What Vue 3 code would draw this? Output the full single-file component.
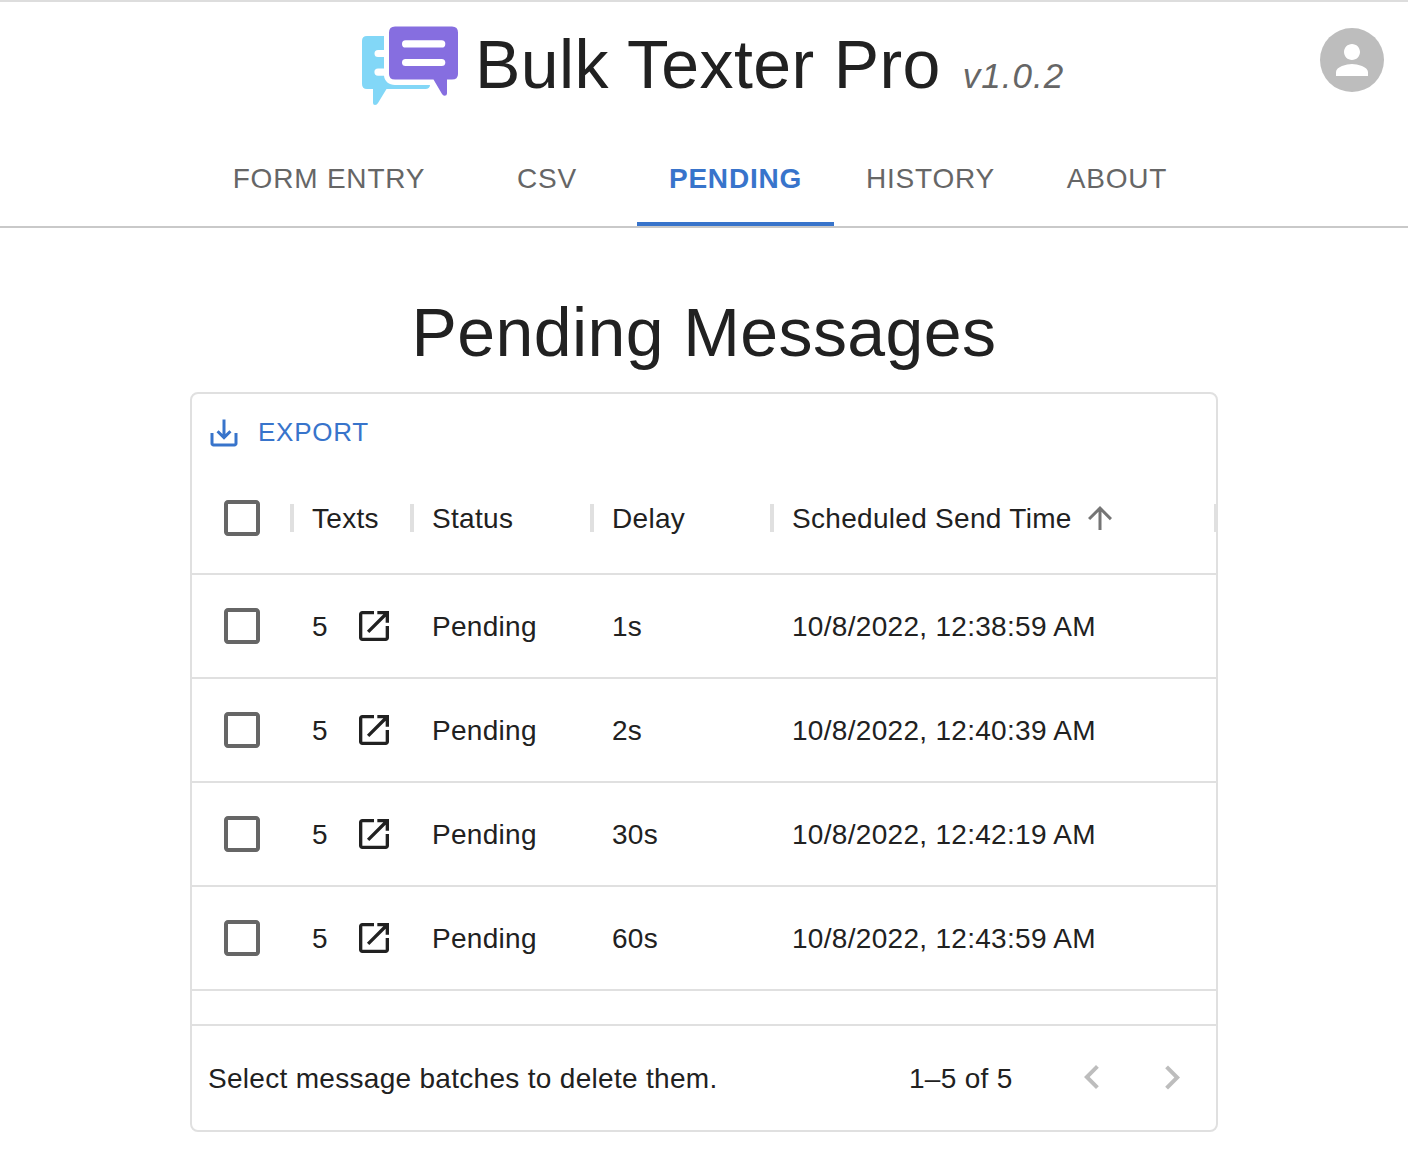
<script setup>
const tabs = [
  { label: 'FORM ENTRY', width: 256 },
  { label: 'CSV', width: 180 },
  { label: 'PENDING', width: 197, active: true },
  { label: 'HISTORY', width: 193 },
  { label: 'ABOUT', width: 180 },
]
const rows = [
  { texts: 5, status: 'Pending', delay: '1s', time: '10/8/2022, 12:38:59 AM' },
  { texts: 5, status: 'Pending', delay: '2s', time: '10/8/2022, 12:40:39 AM' },
  { texts: 5, status: 'Pending', delay: '30s', time: '10/8/2022, 12:42:19 AM' },
  { texts: 5, status: 'Pending', delay: '60s', time: '10/8/2022, 12:43:59 AM' },
]
const boxPath = 'M19 5v14H5V5h14m0-2H5c-1.1 0-2 .9-2 2v14c0 1.1.9 2 2 2h14c1.1 0 2-.9 2-2V5c0-1.1-.9-2-2-2z'
</script>

<template>
  <div class="page">
    <header class="header">
      <div class="brand">
        <svg class="logo" viewBox="0 0 100 84" width="100" height="84">
          <path fill="#82d7f7" d="M7 12H24V26H18a3.5 3.5 0 0 0 0 7H24V44.500H18a3.600 3.600 0 0 0 0 7.200H24C24.500 57 29 61 35 61H70C70 63.500 68 65 65.500 65H26.500L18 79Q17 81 15 81Q13 81 13 79V65H7Q2 65 2 60V17Q2 12 7 12Z" />
          <path fill="#866ee0" d="M35 2.500H92Q98 2.500 98 8.500V50Q98 55.500 92 55.500H87V69.500Q87 71.800 84.500 71.800Q83 71.800 82 70L73.500 55.500H35Q29 55.500 29 50V8.500Q29 2.500 35 2.500Z" />
          <rect x="42" y="16.300" width="43.300" height="7.200" rx="3.600" fill="#fff" />
          <rect x="42" y="34.900" width="43.300" height="7.200" rx="3.600" fill="#fff" />
        </svg>
        <h1 class="title">Bulk Texter Pro</h1>
        <em class="version">v1.0.2</em>
      </div>
      <div class="avatar">
        <svg viewBox="0 0 24 24" width="48" height="48"><path fill="#fff" d="M12 12c2.210 0 4-1.790 4-4s-1.790-4-4-4-4 1.790-4 4 1.790 4 4 4zm0 2c-2.670 0-8 1.340-8 4v2h16v-2c0-2.660-5.330-4-8-4z" /></svg>
      </div>
    </header>

    <nav class="tabs">
      <a v-for="t in tabs" :key="t.label" class="tab" :class="{ active: t.active }" :style="{ width: t.width + 'px' }"><span>{{ t.label }}</span></a>
    </nav>

    <h2 class="heading">Pending Messages</h2>

    <section class="grid">
      <div class="toolbar">
        <svg viewBox="0 0 24 24" width="36" height="36"><path fill="currentColor" d="M19 12v7H5v-7H3v7c0 1.1.9 2 2 2h14c1.1 0 2-.9 2-2v-7h-2zm-6 .67l2.590-2.580L17 11.500l-5 5-5-5 1.410-1.410L11 12.670V3h2z" /></svg>
        <span class="export">EXPORT</span>
      </div>
      <div class="row head">
        <div class="cell check"><svg viewBox="0 0 24 24" width="48" height="48"><path fill="#666" :d="boxPath" /></svg></div>
        <div class="cell texts"><span>Texts</span></div>
        <div class="cell status"><span>Status</span></div>
        <div class="cell delay"><span>Delay</span></div>
        <div class="cell time">
          <span>Scheduled Send Time</span>
          <svg class="sort" viewBox="0 0 24 24" width="36" height="36"><path fill="#757575" d="M4 12l1.410 1.410L11 7.830V20h2V7.830l5.580 5.590L20 12l-8-8-8 8z" /></svg>
        </div>
      </div>
      <div v-for="r in rows" :key="r.time" class="row">
        <div class="cell check"><svg viewBox="0 0 24 24" width="48" height="48"><path fill="#666" :d="boxPath" /></svg></div>
        <div class="cell texts">
          <span>{{ r.texts }}</span>
          <svg class="open" viewBox="0 0 24 24" width="40" height="40"><path fill="#212121" d="M19 19H5V5h7V3H5c-1.110 0-2 .9-2 2v14c0 1.1.89 2 2 2h14c1.1 0 2-.9 2-2v-7h-2v7zM14 3v2h3.590l-9.830 9.830 1.410 1.410L19 6.410V10h2V3h-7z" /></svg>
        </div>
        <div class="cell status"><span>{{ r.status }}</span></div>
        <div class="cell delay"><span>{{ r.delay }}</span></div>
        <div class="cell time"><span>{{ r.time }}</span></div>
      </div>
      <div class="filler"></div>
      <footer class="footer">
        <span class="hint">Select message batches to delete them.</span>
        <span class="range">1–5 of 5</span>
        <svg class="prev" viewBox="0 0 24 24" width="48" height="48"><path fill="#bdbdbd" d="M15.410 16.090l-4.580-4.590 4.580-4.590L14 5.500l-6 6 6 6z" /></svg>
        <svg class="next" viewBox="0 0 24 24" width="48" height="48"><path fill="#bdbdbd" d="M8.590 16.340l4.580-4.590-4.580-4.590L10 5.750l6 6-6 6z" /></svg>
      </footer>
    </section>
  </div>
</template>

<style>
body { margin: 0; background: #fff; }
</style>

<style scoped>
.page {
  box-sizing: border-box;
  width: 1408px;
  height: 1170px;
  overflow: hidden;
  border-top: 2px solid #ddd;
  background: #fff;
  color: #212121;
  font-family: "Liberation Sans", Arial, sans-serif;
  font-size: 28px;
  letter-spacing: 0.3px;
  line-height: 40px;
}
svg { display: block; flex: none; }
span, em, h1, h2 { white-space: nowrap; }
.header {
  display: flex;
  justify-content: space-between;
  align-items: flex-start;
  height: 128px;
  padding: 0 24px 0 360px;
}
.brand { display: flex; align-items: baseline; }
.logo { align-self: flex-start; margin-top: 22px; }
.title {
  margin: 22px 0 0 15px;
  font-size: 68px;
  font-weight: 400;
  line-height: 80px;
  letter-spacing: 0.4px;
}
.version {
  margin-left: 22px;
  color: #666;
  font-size: 35px;
  letter-spacing: 1px;
}
.avatar {
  display: flex;
  align-items: center;
  justify-content: center;
  width: 64px;
  height: 64px;
  margin-top: 26px;
  border-radius: 50%;
  background: #bdbdbd;
}
.tabs {
  display: flex;
  justify-content: center;
  height: 96px;
  border-bottom: 2px solid #c9c9c9;
}
.tab {
  box-sizing: border-box;
  display: flex;
  align-items: center;
  justify-content: center;
  padding-top: 2px;
  color: #666;
  letter-spacing: 0.8px;
}
.tab.active {
  padding-top: 6px;
  border-bottom: 4px solid #3874cb;
  color: #3874cb;
  font-weight: 700;
}
.heading {
  margin: 64px 0 20px;
  font-size: 68px;
  font-weight: 400;
  line-height: 80px;
  letter-spacing: 0.4px;
  text-align: center;
}
.grid {
  box-sizing: border-box;
  display: flex;
  flex-direction: column;
  width: 1028px;
  height: 740px;
  margin: 0 auto;
  border: 2px solid #e0e0e0;
  border-radius: 8px;
  overflow: hidden;
}
.toolbar {
  display: flex;
  align-items: center;
  height: 69px;
  padding-left: 14px;
  box-sizing: border-box;
  padding-top: 8px;
  color: #3874cb;
}
.export {
  margin: -2px 0 0 16px;
  font-size: 26px;
  letter-spacing: 0.75px;
}
.row {
  box-sizing: border-box;
  display: flex;
  height: 104px;
  border-bottom: 2px solid #e0e0e0;
}
.row.head { height: 112px; }
.cell {
  position: relative;
  box-sizing: border-box;
  display: flex;
  align-items: center;
  padding-left: 20px;
}
.cell span, .footer span { padding-top: 2px; }
.check { width: 100px; padding: 0; justify-content: center; }
.texts { width: 120px; }
.status, .delay { width: 180px; }
.time { width: 444px; }
.head .cell::after {
  content: "";
  position: absolute;
  right: -2px;
  top: 41px;
  width: 4px;
  height: 28px;
  background: #e0e0e0;
}
.open { margin-left: 26px; }
.sort { margin-left: 10px; }
.filler { height: 33px; }
.footer {
  display: flex;
  flex: 1;
  align-items: center;
  padding-left: 16px;
  border-top: 2px solid #e0e0e0;
}
.hint { width: 701px; }
.range { width: 159px; }
.next { margin-left: 32px; }
</style>
